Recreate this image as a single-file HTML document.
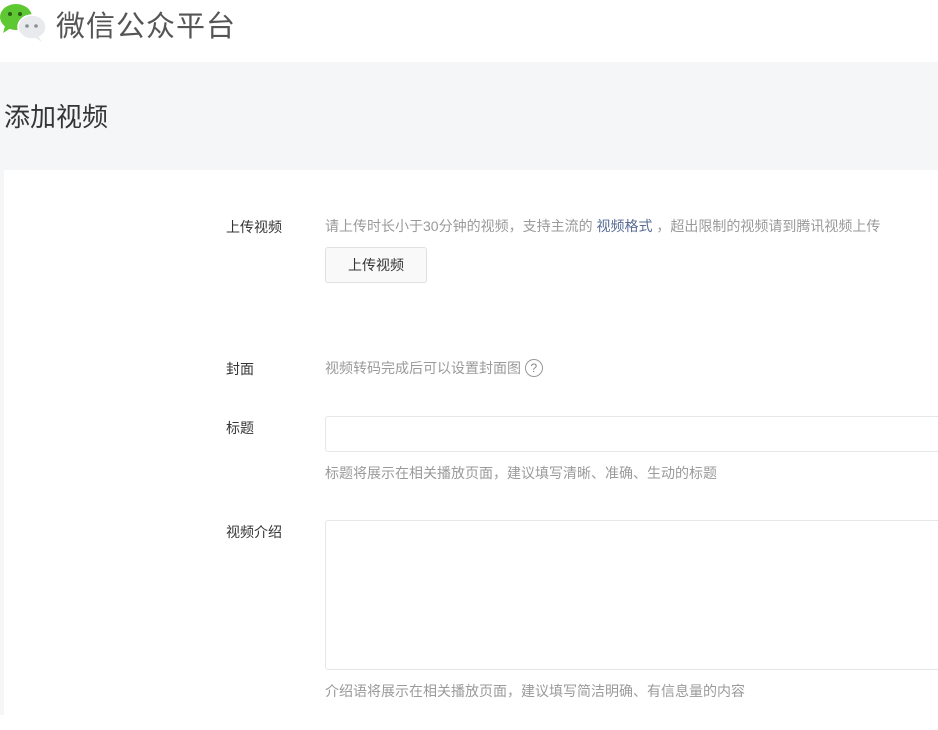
<!DOCTYPE html>
<html><head><meta charset="utf-8"><style>
body{margin:0;width:938px;height:715px;overflow:hidden;background:#fff;font-family:"Liberation Sans","Noto Sans CJK SC",sans-serif;position:relative}
.a{position:absolute;white-space:nowrap}
.hdr{position:absolute;left:0;top:0;width:938px;height:62px;background:#fff}
.band{position:absolute;left:0;top:62px;width:938px;height:653px;background:#f5f6f7}
.panel{position:absolute;left:4px;top:170px;width:940px;height:560px;background:#fff}
.lbl{font-size:14px;color:#353535}
.tip{font-size:14px;color:#9a9a9a}
.box{position:absolute;border:1px solid #e4e8eb;border-radius:3px;background:#fff}
</style></head><body>
<div class="hdr"></div>
<svg class="a" style="left:0;top:2px" width="48" height="42" viewBox="0 0 48 42">
<ellipse cx="16" cy="15" rx="16" ry="13" fill="#5dc832"/>
<path d="M5 24 L3 31 L11 26Z" fill="#5dc832"/>
<circle cx="10" cy="12" r="2" fill="#2c5d17"/><circle cx="20" cy="12" r="2" fill="#2c5d17"/>
<ellipse cx="32" cy="25" rx="14" ry="12" fill="#e8eaee" stroke="#fff" stroke-width="1.5"/>
<path d="M38 34 L42 40 L34 35Z" fill="#e8eaee"/>
<circle cx="27" cy="24" r="1.8" fill="#8b8f96"/><circle cx="36" cy="24" r="1.8" fill="#8b8f96"/>
</svg>
<div class="a" style="left:56px;top:3px;font-size:29px;color:#555;letter-spacing:1px">微信公众平台</div>
<div class="band"></div>
<div class="a" style="left:4px;top:97px;font-size:26px;color:#353535">添加视频</div>
<div class="panel"></div>
<div class="a lbl" style="left:226px;top:217px">上传视频</div>
<div class="a tip" style="left:325px;top:216px">请上传时长小于30分钟的视频，支持主流的 <span style="color:#576b95">视频格式</span> ，超出限制的视频请到腾讯视频上传</div>
<div class="a" style="left:325px;top:247px;width:100px;height:34px;border:1px solid #e0e0e0;border-radius:3px;background:#f9f9f9;font-size:14px;color:#353535;text-align:center;line-height:34px">上传视频</div>
<div class="a lbl" style="left:226px;top:359px">封面</div>
<div class="a tip" style="left:325px;top:358px">视频转码完成后可以设置封面图 <span style="display:inline-block;width:16px;height:16px;border:1px solid #999;border-radius:50%;font-size:12px;color:#888;text-align:center;line-height:16px;vertical-align:1px">?</span></div>
<div class="a lbl" style="left:226px;top:418px">标题</div>
<div class="box" style="left:325px;top:416px;width:640px;height:34px"></div>
<div class="a tip" style="left:325px;top:463px">标题将展示在相关播放页面，建议填写清晰、准确、生动的标题</div>
<div class="a lbl" style="left:226px;top:522px">视频介绍</div>
<div class="box" style="left:325px;top:520px;width:640px;height:148px"></div>
<div class="a tip" style="left:325px;top:681px">介绍语将展示在相关播放页面，建议填写简洁明确、有信息量的内容</div>
</body></html>
